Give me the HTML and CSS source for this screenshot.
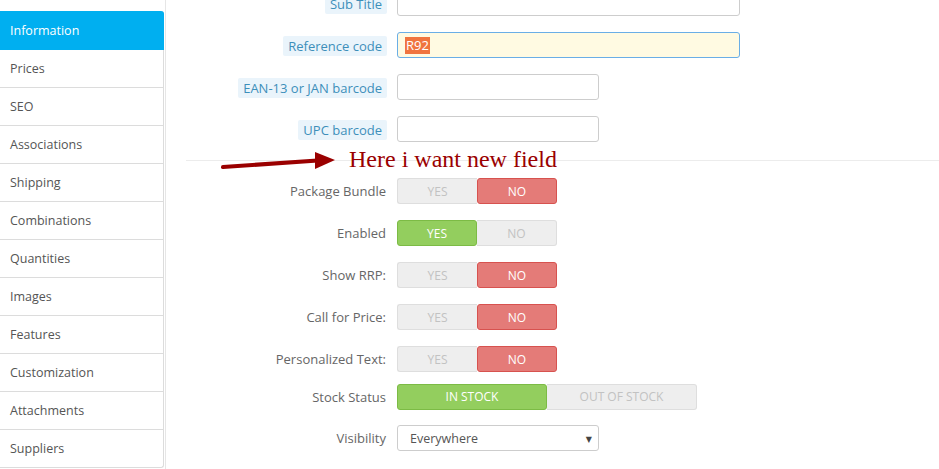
FILE: index.html
```html
<!DOCTYPE html>
<html>
<head>
<meta charset="utf-8">
<link rel="stylesheet" href="styles.css">
</head>
<body>
<div class="page">
  <ul class="tabs">
    <li class="tab active">Information</li>
    <li class="tab">Prices</li>
    <li class="tab">SEO</li>
    <li class="tab">Associations</li>
    <li class="tab">Shipping</li>
    <li class="tab">Combinations</li>
    <li class="tab">Quantities</li>
    <li class="tab">Images</li>
    <li class="tab">Features</li>
    <li class="tab">Customization</li>
    <li class="tab">Attachments</li>
    <li class="tab">Suppliers</li>
  </ul>
  <div class="main">
    <div class="form">
      <div class="row">
        <div class="label-cell"><span class="hint">Sub Title</span></div>
        <div class="input long"></div>
      </div>
      <div class="row">
        <div class="label-cell"><span class="hint">Reference code</span></div>
        <div class="input long focus"><span class="sel">R92</span></div>
      </div>
      <div class="row">
        <div class="label-cell"><span class="hint">EAN-13 or JAN barcode</span></div>
        <div class="input short"></div>
      </div>
      <div class="row">
        <div class="label-cell"><span class="hint">UPC barcode</span></div>
        <div class="input short"></div>
      </div>
      <hr class="sep">
      <div class="row first-toggle">
        <div class="label-cell"><span class="plain">Package Bundle</span></div>
        <div class="switch"><span class="opt">YES</span><span class="opt no-on">NO</span></div>
      </div>
      <div class="row">
        <div class="label-cell"><span class="plain">Enabled</span></div>
        <div class="switch"><span class="opt yes-on">YES</span><span class="opt">NO</span></div>
      </div>
      <div class="row">
        <div class="label-cell"><span class="plain">Show RRP:</span></div>
        <div class="switch"><span class="opt">YES</span><span class="opt no-on">NO</span></div>
      </div>
      <div class="row">
        <div class="label-cell"><span class="plain">Call for Price:</span></div>
        <div class="switch"><span class="opt">YES</span><span class="opt no-on">NO</span></div>
      </div>
      <div class="row">
        <div class="label-cell"><span class="plain">Personalized Text:</span></div>
        <div class="switch"><span class="opt">YES</span><span class="opt no-on">NO</span></div>
      </div>
      <div class="row stock-row">
        <div class="label-cell"><span class="plain">Stock Status</span></div>
        <div class="switch wide"><span class="opt yes-on">IN STOCK</span><span class="opt">OUT OF STOCK</span></div>
      </div>
      <div class="row vis-row">
        <div class="label-cell"><span class="plain">Visibility</span></div>
        <div class="select short"><span>Everywhere</span><span class="caret">&#9660;</span></div>
      </div>
    </div>
  </div>
</div>
<div class="note">
  <svg class="arrow" width="140" height="30" viewBox="0 0 140 30">
    <line x1="4" y1="17" x2="106" y2="10" stroke="#9a0000" stroke-width="4" stroke-linecap="round"/>
    <polygon points="96,2 116,10 96,19" fill="#9a0000"/>
  </svg>
  <span class="note-text">Here i want new field</span>
</div>
</body>
</html>
```
FILE: styles.css
```css
* { box-sizing: border-box; }
html, body { margin: 0; padding: 0; background: #fff; }
body {
  font-family: "Open Sans", "DejaVu Sans", sans-serif;
  font-size: 13px;
  color: #666;
  width: 939px;
  height: 469px;
  overflow: hidden;
  position: relative;
}
.page { display: flex; align-items: flex-start; height: 469px; }
.tabs {
  list-style: none;
  margin: 11px 0 0 0;
  padding: 0;
  width: 164px;
  flex: none;
  border-right: 1px solid #dcdcdc;
  border-bottom: 1px solid #dcdcdc;
  border-radius: 0 3px 3px 0;
}
.tab {
  height: 38px;
  line-height: 37px;
  padding-left: 10px;
  border-bottom: 1px solid #dcdcdc;
  color: #555;
  font-size: 12.5px;
}
.tab:last-child { border-bottom: none; height: 37px; }
.tab.active {
  background: #00aff0;
  color: #fff;
  height: 39px;
  line-height: 40px;
  border-bottom: none;
  border-radius: 0 3px 0 0;
  margin-right: -1px;
}
.main {
  margin-left: 1px;
  border-left: 1px solid #e6e6e6;
  height: 469px;
  flex: 1;
  padding-left: 20px;
}
.form { margin-top: -10px; display: flex; flex-direction: column; }
.row { display: flex; align-items: center; height: 26px; margin-bottom: 16px; }
.label-cell {
  width: 211px;
  padding-right: 10px;
  text-align: right;
  flex: none;
}
.hint {
  display: inline-block;
  background: #eaf4fb;
  color: #3d8fba;
  padding: 1px 5px 0 5px;
  height: 20px;
  line-height: 19px;
  border-radius: 2px;
  margin-top: 1px;
}
.plain { color: #666; padding-right: 1px; }
.input {
  height: 26px;
  border: 1px solid #cdcdcd;
  border-radius: 3px;
  background: #fff;
  padding: 0 8px;
  display: flex;
  align-items: center;
}
.long { width: 343px; }
.short { width: 202px; }
.focus { background: #fffae2; border-color: #6aaee6; }
.sel { background: #f0743f; color: #fff; line-height: 17px; padding: 0 1px; margin-left: -1px; }
.sep {
  border: 0;
  border-top: 1px solid #ececec;
  margin: 2px 0 17px 0;
  height: 0;
}
.switch {
  display: flex;
  width: 160px;
  height: 26px;
  font-size: 12px;
}
.switch.wide { width: 300px; height: 26px; }
.opt {
  width: 50%;
  display: flex;
  align-items: center;
  justify-content: center;
  color: #c2c2c2;
  background: #eee;
  border: 1px solid #dedede;
}
.opt:first-child { border-radius: 3px 0 0 3px; border-right: none; }
.opt:last-child { border-radius: 0 3px 3px 0; border-left: none; }
.opt.no-on {
  background: #e47b78;
  border: 1px solid #d7524f;
  border-radius: 3px;
  color: #fff;
}
.opt.yes-on {
  background: #93ce5e;
  border: 1px solid #7cbb45;
  border-radius: 3px;
  color: #fff;
}
.stock-row { margin-top: -4px; margin-bottom: 15px; }
.stock-row .opt { padding-bottom: 2px; }
.select {
  height: 26px;
  border: 1px solid #cdcdcd;
  border-radius: 3px;
  display: flex;
  align-items: center;
  justify-content: space-between;
  padding: 0 6px 0 12px;
  color: #555;
  font-size: 12.5px;
}
.caret { font-size: 8px; color: #444; }
.note {
  position: absolute;
  left: 219px;
  top: 145px;
  display: flex;
  align-items: flex-start;
}
.arrow { margin-top: 5px; }
.note-text {
  font-family: "Liberation Serif", "Times New Roman", serif;
  font-size: 24px;
  color: #9a0000;
  margin-left: -10px;
  line-height: 28px;
}
```
